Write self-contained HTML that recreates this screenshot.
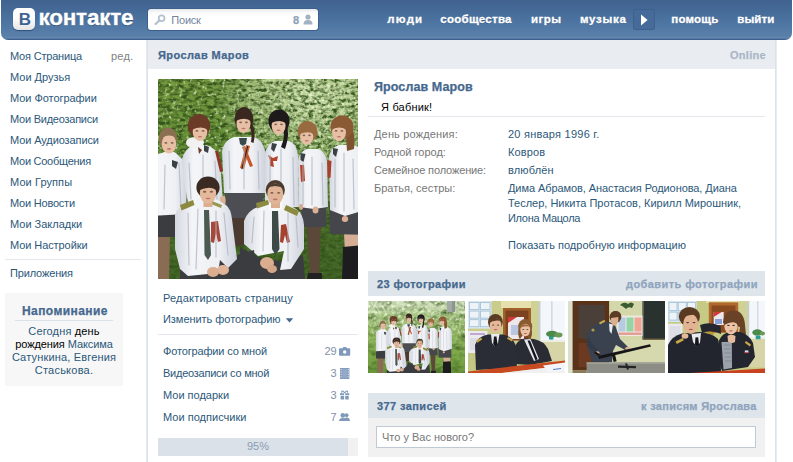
<!DOCTYPE html>
<html lang="ru">
<head>
<meta charset="utf-8">
<title>Ярослав Маров</title>
<style>
html,body{margin:0;padding:0;background:#fff;}
body{width:793px;height:462px;overflow:hidden;position:relative;font-family:"Liberation Sans",sans-serif;font-size:11px;color:#000;}
.a{position:absolute;white-space:nowrap;line-height:13px;}
.b{font-weight:bold;-webkit-text-stroke-width:.25px;}
.lnk{color:#2b587a;}
.gr{color:#777;}
#hdr{position:absolute;left:1px;top:0;width:791px;height:40px;border-radius:0 0 7px 7px;
 background:linear-gradient(#40628f 0,#456a97 10px,#5078a4 26px,#5b80aa 37px,#6a8db6 38px,#3f6190 39px);}
#logo{position:absolute;left:12px;top:8px;width:22px;height:22px;border-radius:5px;background:linear-gradient(#fff 40%,#e4e4e4);box-shadow:0 1px 1px #2f4f7a;}
#logo span{position:absolute;left:5.8px;top:2px;font-weight:bold;font-size:17px;line-height:20px;color:#3f6491;}
#ltxt{position:absolute;left:37.5px;top:6px;-webkit-text-stroke:0.3px #fff;font-weight:bold;font-size:22.5px;line-height:24px;color:#fff;text-shadow:0 1px 0 #35547e;}
#srch{position:absolute;left:147px;top:9px;width:170px;height:21px;border-radius:3px;background:linear-gradient(#e4e6e9 0,#f8f8f9 3px,#fff 6px);box-shadow:0 0 0 1px #3d5f8b;}
.nav{position:absolute;top:13px;-webkit-text-stroke-width:.3px;font-weight:bold;font-size:11.5px;text-shadow:0 1px 0 #3d5d88;line-height:13px;color:#fff;white-space:nowrap;}
#lb{position:absolute;left:146px;top:40px;width:2px;height:422px;background:linear-gradient(90deg,#e9eef3,#d5dde6);}
#rb{position:absolute;left:775px;top:40px;width:2px;height:422px;background:linear-gradient(90deg,#d5dde6,#ecf0f4);}
#tbar{position:absolute;left:148px;top:40px;width:627px;height:29px;background:#e9edf1;}
.sbar{position:absolute;left:368px;width:397px;height:25px;background:#dee5eb;}
.sep{position:absolute;height:1px;background:#e4e8ed;}
.th{position:absolute;top:301px;width:97px;height:72px;overflow:hidden;}
</style>
</head>
<body>
<!-- header -->
<div id="hdr">
 <div id="logo"><span>В</span></div>
 <div id="ltxt" style="letter-spacing:-0.23px">контакте</div>
 <div id="srch">
  <svg style="position:absolute;left:6px;top:5px" width="12" height="12" viewBox="0 0 12 12"><circle cx="7.6" cy="4.2" r="2.9" fill="none" stroke="#b4c0cf" stroke-width="1.7"/><path d="M5.4 6.4L1.6 10" stroke="#b4c0cf" stroke-width="2.2" stroke-linecap="round"/></svg>
  <span class="a" style="left:23.3px;top:5px;color:#73859c;letter-spacing:-0.22px">Поиск</span>
  <span class="a b" style="left:145px;top:5px;color:#8fa1b8;">8</span>
  <svg style="position:absolute;left:155px;top:5px" width="10" height="11" viewBox="0 0 10 11"><circle cx="5" cy="3" r="2.6" fill="#a3b1c4"/><path d="M0.5 10.5C0.5 7 2.5 6 5 6S9.5 7 9.5 10.5Z" fill="#a3b1c4"/></svg>
 </div>
 <span class="nav" style="left:386.3px;letter-spacing:1.18px">люди</span>
 <span class="nav" style="left:439.3px;letter-spacing:0.26px">сообщества</span>
 <span class="nav" style="left:530px;letter-spacing:0.49px">игры</span>
 <span class="nav" style="left:579px;letter-spacing:0.74px">музыка</span>
 <div style="position:absolute;left:632px;top:9px;width:22px;height:21px;border-radius:3px;background:#466a99;box-shadow:0 0 0 1px #3e608d inset;"><svg style="position:absolute;left:8px;top:5px" width="8" height="12" viewBox="0 0 8 12"><path d="M0 0.5L6.6 6L0 11.5Z" fill="#fff"/></svg></div>
 <span class="nav" style="left:670.3px;letter-spacing:0.20px">помощь</span>
 <span class="nav" style="left:736.3px;letter-spacing:0.06px">выйти</span>
</div>

<!-- left menu -->
<span class="a lnk" style="left:10px;top:50px;letter-spacing:-0.19px">Моя Страница</span>
<span class="a gr" style="left:111px;top:50px;color:#808080;letter-spacing:0.24px">ред.</span>
<span class="a lnk" style="left:10px;top:71px;letter-spacing:0.00px">Мои Друзья</span>
<span class="a lnk" style="left:10px;top:92px;letter-spacing:-0.05px">Мои Фотографии</span>
<span class="a lnk" style="left:10px;top:113px;letter-spacing:-0.24px">Мои Видеозаписи</span>
<span class="a lnk" style="left:10px;top:134px;letter-spacing:-0.10px">Мои Аудиозаписи</span>
<span class="a lnk" style="left:10px;top:155px;letter-spacing:-0.26px">Мои Сообщения</span>
<span class="a lnk" style="left:10px;top:176px;letter-spacing:0.09px">Мои Группы</span>
<span class="a lnk" style="left:10px;top:197px;letter-spacing:-0.21px">Мои Новости</span>
<span class="a lnk" style="left:10px;top:218px;letter-spacing:-0.01px">Мои Закладки</span>
<span class="a lnk" style="left:10px;top:239px;letter-spacing:-0.08px">Мои Настройки</span>
<div class="sep" style="left:5px;top:259px;width:136px;"></div>
<span class="a lnk" style="left:10px;top:267px;letter-spacing:-0.15px">Приложения</span>

<!-- reminder -->
<div style="position:absolute;left:5px;top:293px;width:118px;height:93px;background:#f7f7f7;"></div>
<span class="a b" style="left:22px;top:304px;font-size:12px;line-height:14px;color:#45688e;letter-spacing:0.42px">Напоминание</span>
<div class="sep" style="left:15px;top:320px;width:98px;background:#dae1e8"></div>
<div class="a" style="left:5px;top:325px;width:118px;text-align:center;color:#2b587a;white-space:normal;"><span style="letter-spacing:0.15px">Сегодня <span style="color:#000">день</span></span><br><span style="letter-spacing:-0.10px"><span style="color:#000">рождения</span> Максима</span><br><span style="letter-spacing:0.17px">Сатункина, Евгения</span><br><span style="letter-spacing:0.23px">Стаськова.</span></div>

<!-- content frame -->
<div id="lb"></div><div id="rb"></div>
<div id="tbar"></div>
<span class="a b" style="left:158px;top:49px;color:#45688e;letter-spacing:0.41px">Ярослав Маров</span>
<span class="a b" style="left:730px;top:49px;color:#aab7c7;letter-spacing:0.29px">Online</span>

<!-- main photo -->
<div id="photo" style="position:absolute;left:158px;top:79px;width:200px;height:200px;background:#5c7a3c;overflow:hidden;"><svg width="200" height="200" viewBox="0 0 200 200" style="position:absolute;left:0;top:0"><defs><linearGradient id="mg" x1="0" y1="0" x2="0" y2="1"><stop offset="0" stop-color="#75993f"/><stop offset=".3" stop-color="#668f36"/><stop offset=".6" stop-color="#5a8030"/><stop offset=".72" stop-color="#4a6e2a"/><stop offset="1" stop-color="#426326"/></linearGradient><radialGradient id="ml" cx=".8" cy=".12" r=".55"><stop offset="0" stop-color="#d2e2b2" stop-opacity=".85"/><stop offset=".5" stop-color="#d2e2b2" stop-opacity=".5"/><stop offset="1" stop-color="#dfe9c8" stop-opacity="0"/></radialGradient><filter id="mn" color-interpolation-filters="sRGB" x="0" y="0" width="100%" height="100%"><feTurbulence type="fractalNoise" baseFrequency="0.28" numOctaves="2" seed="4"/><feColorMatrix type="matrix" values="0 0 0 0 0.86  0 0 0 0 0.92  0 0 0 0 0.74  2.6 1.6 0 0 -2.3"/></filter><filter id="mn2" color-interpolation-filters="sRGB" x="0" y="0" width="100%" height="100%"><feTurbulence type="fractalNoise" baseFrequency="0.33" numOctaves="2" seed="21"/><feColorMatrix type="matrix" values="0 0 0 0 0.9  0 0 0 0 0.95  0 0 0 0 0.8  2.4 1.6 0 0 -1.85"/></filter><radialGradient id="mr" cx=".8" cy=".12" r=".5"><stop offset="0" stop-color="#fff"/><stop offset=".6" stop-color="#fff" stop-opacity=".6"/><stop offset="1" stop-color="#fff" stop-opacity="0"/></radialGradient><mask id="mm2"><rect width="200" height="200" fill="url(#mr)"/></mask><filter id="md" color-interpolation-filters="sRGB" x="0" y="0" width="100%" height="100%"><feTurbulence type="fractalNoise" baseFrequency="0.16 0.3" numOctaves="2" seed="9"/><feColorMatrix type="matrix" values="0 0 0 0 0.2  0 0 0 0 0.33  0 0 0 0 0.1  0 2.6 1.6 0 -1.75"/></filter><filter id="mb" color-interpolation-filters="sRGB" x="-5%" y="-5%" width="110%" height="110%"><feGaussianBlur stdDeviation="0.75"/></filter><linearGradient id="mf" x1="0" y1="0" x2="0" y2="1"><stop offset="0" stop-color="#fff"/><stop offset=".5" stop-color="#fff"/><stop offset=".72" stop-color="#fff" stop-opacity=".15"/><stop offset="1" stop-color="#fff" stop-opacity=".1"/></linearGradient><mask id="mm"><rect width="200" height="200" fill="url(#mf)"/></mask><linearGradient id="sh" x1="0" y1="0" x2="1" y2="0"><stop offset="0" stop-color="#d3d7df"/><stop offset=".28" stop-color="#f4f5f8"/><stop offset=".7" stop-color="#eef0f4"/><stop offset="1" stop-color="#cfd3dc"/></linearGradient></defs><rect width="200" height="200" fill="url(#mg)"/><rect width="200" height="140" fill="url(#ml)"/><rect width="200" height="200" filter="url(#md)"/><g mask="url(#mm)"><rect width="200" height="200" filter="url(#mn)"/></g><g mask="url(#mm2)"><rect width="200" height="140" filter="url(#mn2)"/></g><g filter="url(#mb)"><path d="M186 154L206 154L205 175L187 175Z" fill="#d6ae96"/><path d="M185 168L207 166L208 200L184 200Z" fill="#1d1d20"/><path d="M171 126L208 128L209 156L172 155Z" fill="#44464b"/><path d="M171 78Q173 68 181 66L195 66Q206 69 210 80L211 130L187 137L172 131Z" fill="url(#sh)"/><path d="M190 44Q198 50 196 70L189 72L188 56Z" fill="#7f5230"/><ellipse cx="184" cy="48" rx="11.5" ry="11.5" fill="#8a5a34"/><ellipse cx="181" cy="53" rx="7" ry="9.2" fill="#e6bfa4"/><path d="M173.2 50.7Q176.8 41.5 182.4 43.3Q188.7 44.7 188.8 51.2Q183.1 46.1 173.2 50.7Z" fill="#8a5a34"/><ellipse cx="178.1" cy="51.9" rx="1.4" ry="0.8" fill="#5a4036" opacity=".75"/><ellipse cx="183.9" cy="51.9" rx="1.4" ry="0.8" fill="#5a4036" opacity=".75"/><ellipse cx="181.0" cy="57.8" rx="2.1" ry="0.7" fill="#b0645a" opacity=".8"/><path d="M169.5 81l4 1l-1 17l-3.5 -1z" fill="#a8402e"/><path d="M175 69l5 1l-2 8l-3 -3z" fill="#3a4044"/><path d="M148.5 146L163 146L161 196L152 196Z" fill="#5c4838"/><path d="M150 194L164 194L164 200L149 200Z" fill="#222"/><path d="M143 126L168 126L168.5 148L144 148Z" fill="#44464b"/><path d="M140 82Q142 72 149 70L160 70Q167 72 169 82L170 128L156 130L141 128Z" fill="url(#sh)"/><ellipse cx="149.5" cy="52.5" rx="10" ry="10.5" fill="#996a40"/><ellipse cx="148.7" cy="57.4" rx="6.6" ry="8.4" fill="#e6bfa4"/><path d="M141.3 55.3Q144.7 46.9 150.0 48.6Q156.0 49.8 156.1 55.7Q150.7 51.1 141.3 55.3Z" fill="#996a40"/><ellipse cx="145.9" cy="56.4" rx="1.3" ry="0.8" fill="#5a4036" opacity=".75"/><ellipse cx="151.5" cy="56.4" rx="1.3" ry="0.8" fill="#5a4036" opacity=".75"/><ellipse cx="148.7" cy="61.8" rx="2.0" ry="0.7" fill="#b0645a" opacity=".8"/><path d="M142.5 74l5 1l-2 8l-3 -2z" fill="#3a4044"/><path d="M142 86l4 0l1 16l-4 1z" fill="#b4442e"/><path d="M107 74Q110 64 117 62L131 62Q138 64 140 76L141 128L107 128Z" fill="url(#sh)"/><path d="M127 44Q133 52 127 70L123 68Q128 56 125 48Z" fill="#1e1a1c"/><ellipse cx="121" cy="42" rx="10.6" ry="11.5" fill="#1e1a1c"/><ellipse cx="120.6" cy="46.5" rx="7" ry="9.2" fill="#e6bfa4"/><path d="M112.8 44.2Q116.4 35.0 122.0 36.8Q128.3 38.2 128.4 44.7Q122.7 39.6 112.8 44.2Z" fill="#1e1a1c"/><ellipse cx="117.7" cy="45.4" rx="1.4" ry="0.8" fill="#5a4036" opacity=".75"/><ellipse cx="123.5" cy="45.4" rx="1.4" ry="0.8" fill="#5a4036" opacity=".75"/><ellipse cx="120.6" cy="51.3" rx="2.1" ry="0.7" fill="#b0645a" opacity=".8"/><path d="M114 64l5 1l-3 8l-3 -3z" fill="#3a4044"/><path d="M110 76l5 3l5 -2l-1 5l-4 0l1 6l-4 -1l0 -6z" fill="#b4442e"/><path d="M-6 156L12 156L11 200L-5 200Z" fill="#8a6c54"/><path d="M-9 134L17 133L18 158L-10 158Z" fill="#3a3c40"/><path d="M-10 84Q-8 76 4 74Q11 70 18 74L26 82L29 100L28 135L-10 137Z" fill="url(#sh)"/><ellipse cx="10" cy="59.5" rx="9.2" ry="11" fill="#8a7050"/><ellipse cx="11" cy="65" rx="7.3" ry="9.4" fill="#e6bfa4"/><ellipse cx="7.9" cy="63.9" rx="1.5" ry="0.8" fill="#5a4036" opacity=".75"/><ellipse cx="14.1" cy="63.9" rx="1.5" ry="0.8" fill="#5a4036" opacity=".75"/><ellipse cx="11.0" cy="69.9" rx="2.2" ry="0.8" fill="#b0645a" opacity=".8"/><path d="M3 58Q10 50 19 58Q11 55 3 58Z" fill="#8a7050"/><path d="M14 81l6 2l-2 7l-4 -3z" fill="#3a4044"/><path d="M24 80Q27 69 36 66L48 66Q58 68 62 80L65 124L30 124L26 100Z" fill="url(#sh)"/><ellipse cx="37" cy="63.5" rx="9" ry="5.6" fill="#f1f1f1"/><ellipse cx="41" cy="47" rx="11.2" ry="12" fill="#6c3b28"/><ellipse cx="42" cy="53" rx="7.3" ry="9" fill="#e6bfa4"/><path d="M33.9 50.8Q37.6 41.8 43.5 43.5Q50.0 44.9 50.1 51.2Q44.2 46.2 33.9 50.8Z" fill="#6c3b28"/><ellipse cx="38.9" cy="51.9" rx="1.5" ry="0.8" fill="#5a4036" opacity=".75"/><ellipse cx="45.1" cy="51.9" rx="1.5" ry="0.8" fill="#5a4036" opacity=".75"/><ellipse cx="42.0" cy="57.7" rx="2.2" ry="0.7" fill="#b0645a" opacity=".8"/><path d="M46 66l5 2l-1 6l-4 -2z" fill="#3a4044"/><path d="M57 72l3 0l5 20l-3 1z" fill="#8e3428"/><path d="M40 68l4 3l-3 4z" fill="#6c3b28"/><path d="M71 138L87 138L86 166L74 168Z" fill="#4a3a30"/><path d="M62 118l5 -1l1 8l-5 1z" fill="#dcb296"/><path d="M67 112L106 112L104 139L68 139Z" fill="#4c4e53"/><path d="M64 72Q66 61 76 58L96 58Q104 60 107 72L107 114L66 114Z" fill="url(#sh)"/><path d="M92 40Q99 52 95.5 64L93 63Q95 52 90 44Z" fill="#3a2820"/><ellipse cx="86" cy="40" rx="9.4" ry="12" fill="#3a2820"/><ellipse cx="85.5" cy="44.5" rx="7" ry="9.6" fill="#e6bfa4"/><path d="M77.7 42.1Q81.3 32.5 86.9 34.4Q93.2 35.9 93.3 42.6Q87.6 37.3 77.7 42.1Z" fill="#3a2820"/><ellipse cx="82.6" cy="43.3" rx="1.4" ry="0.9" fill="#5a4036" opacity=".75"/><ellipse cx="88.4" cy="43.3" rx="1.4" ry="0.9" fill="#5a4036" opacity=".75"/><ellipse cx="85.5" cy="49.5" rx="2.1" ry="0.8" fill="#b0645a" opacity=".8"/><path d="M81 59l8 0l-1 6l-3 2l-3 -2z" fill="#3a4a4c"/><path d="M88 66l4 1l-6 23l-4 -1z" fill="#d0602e"/><path d="M84 68l3 -1l8 20l-3 1z" fill="#c4562a"/><path d="M89.3 67l1 .3l-6 23l-1 -.3z" fill="#222"/><g stroke="#aeb4c2" stroke-width="1.2" fill="none" opacity=".75" stroke-linecap="round"><path d="M21 84L23 128"/><path d="M7 86L6 130"/><path d="M31 84L33 120"/><path d="M57 82L59 120"/><path d="M45 76L45 120"/><path d="M71 72L72 110"/><path d="M100 72L101 110"/><path d="M86 66L86 110"/><path d="M112 76L112 126"/><path d="M135 78L136 126"/><path d="M123 70L123 104"/><path d="M145 84L145 126"/><path d="M164 84L165 126"/><path d="M154 78L154 126"/><path d="M177 80L177 128"/><path d="M195 80L196 130"/><path d="M186 74L186 132"/></g><ellipse cx="157.5" cy="131" rx="3" ry="3.6" fill="#dcb094"/><ellipse cx="187" cy="140" rx="3.2" ry="3" fill="#dcb094"/><ellipse cx="65" cy="121" rx="2.6" ry="4" fill="#dcb094"/><ellipse cx="143" cy="128" rx="2" ry="3" fill="#d4a88c"/><path d="M82 168L100 178L122 182L145 176L147 200L82 200Z" fill="#3a3c40"/><path d="M86 142Q90 131 100 128L108 124L128 124L138 130Q145 134 146 146L146 170L133 190L122 191L126 172L100 177L86 165Z" fill="url(#sh)"/><path d="M98 124l12 -3l1 4.5l-12 4z" fill="#8c8a3e"/><path d="M128 126l13 6l-2 5l-13 -6z" fill="#8c8a3e"/><path d="M111 124l7 3l6 -3l0 6l-6 4l-7 -4z" fill="#fafafa"/><path d="M114 132L120 132L121.5 170L117.5 176L114 170Z" fill="#3e4a48"/><path d="M123 146l5 -1l4 18l-3 1l-2 -8l-2 8l-3 -1z" fill="#a8402e"/><rect x="113" y="123" width="9" height="6" fill="#dcae90"/><ellipse cx="117.3" cy="111" rx="9.6" ry="10" fill="#4a3c30"/><ellipse cx="117.3" cy="115" rx="8" ry="10.4" fill="#e0b496"/><ellipse cx="113.9" cy="113.8" rx="1.6" ry="0.9" fill="#5a4036" opacity=".75"/><ellipse cx="120.7" cy="113.8" rx="1.6" ry="0.9" fill="#5a4036" opacity=".75"/><ellipse cx="117.3" cy="120.4" rx="2.4" ry="0.8" fill="#b0645a" opacity=".8"/><path d="M108 110Q117 99 126.5 110Q117 104 108 110Z" fill="#4a3c30"/><ellipse cx="109" cy="184" rx="7" ry="6" fill="#dcae90"/><ellipse cx="114" cy="190" rx="5" ry="4" fill="#d4a688"/><path d="M22 176L60 182L96 171L98 200L22 200Z" fill="#3a3c40"/><path d="M17 136Q20 127 32 124L40 121L60 121L68 126Q73 130 74 140L79 180L70 189L62 181L60 194L30 197L22 190L17 170Z" fill="url(#sh)"/><path d="M22 126l13 -5l1.5 5l-13 5.5z" fill="#8c8a3e"/><path d="M54 122l10 4l-1 3l-10 -4z" fill="#9a9850"/><rect x="45.5" y="121" width="9" height="7" fill="#dcae90"/><path d="M46 131L51 131L53 176L50 181L46.5 176Z" fill="#4a5a52"/><path d="M53 143l7 -1l3 20l-3 1l-2 -9l-2 10l-3 -1z" fill="#a8483a"/><ellipse cx="50" cy="108.5" rx="11.6" ry="11" fill="#3a2a22"/><ellipse cx="50" cy="114" rx="8.2" ry="10.6" fill="#e4b89a"/><path d="M41.0 111.3Q45.1 100.8 51.6 102.9Q59.0 104.5 59.0 111.9Q52.5 106.0 41.0 111.3Z" fill="#3a2a22"/><ellipse cx="46.6" cy="112.7" rx="1.6" ry="1.0" fill="#5a4036" opacity=".75"/><ellipse cx="53.4" cy="112.7" rx="1.6" ry="1.0" fill="#5a4036" opacity=".75"/><ellipse cx="50.0" cy="119.5" rx="2.5" ry="0.8" fill="#b0645a" opacity=".8"/><g stroke="#aeb4c2" stroke-width="1.2" fill="none" opacity=".75" stroke-linecap="round"><path d="M30 134L31 186"/><path d="M66 134L70 176"/><path d="M40 130L38 190"/><path d="M58 132L58 178"/><path d="M96 138L94 164"/><path d="M138 138L140 168"/><path d="M106 132L105 172"/><path d="M130 134L130 182"/></g><ellipse cx="65" cy="191" rx="6" ry="5" fill="#e0b496"/><ellipse cx="55" cy="193" rx="6" ry="5" fill="#dcae90"/></g></svg></div>

<!-- under photo -->
<span class="a lnk" style="left:163px;top:292px;letter-spacing:0.19px">Редактировать страницу</span>
<span class="a lnk" style="left:163px;top:313px;letter-spacing:-0.04px">Изменить фотографию</span>
<svg style="position:absolute;left:285px;top:318px" width="9" height="5" viewBox="0 0 9 5"><path d="M0.8 0.2H8.2L4.5 4.4Z" fill="#45688e"/></svg>
<div class="sep" style="left:158px;top:334px;width:200px;"></div>
<span class="a lnk" style="left:163px;top:345px;letter-spacing:-0.15px">Фотографии со мной</span>
<span class="a lnk" style="left:163px;top:367px;letter-spacing:-0.24px">Видеозаписи со мной</span>
<span class="a lnk" style="left:163px;top:389px;letter-spacing:0.00px">Мои подарки</span>
<span class="a lnk" style="left:163px;top:411px;letter-spacing:0.02px">Мои подписчики</span>
<span class="a" style="left:300.7px;width:36px;text-align:right;top:345px;color:#8190a6">29</span>
<span class="a" style="left:300.7px;width:36px;text-align:right;top:367px;color:#8190a6">3</span>
<span class="a" style="left:300.7px;width:36px;text-align:right;top:389px;color:#8190a6">3</span>
<span class="a" style="left:300.7px;width:36px;text-align:right;top:411px;color:#8190a6">7</span>
<svg style="position:absolute;left:339px;top:347px" width="12" height="9" viewBox="0 0 12 9"><path d="M0 2.2Q0 1.2 1 1.2H3.6L4.4 0H7.2L8 1.2H10.2Q11.2 1.2 11.2 2.2V7.8Q11.2 8.8 10.2 8.8H1Q0 8.8 0 7.8Z" fill="#7f99bb"/><circle cx="5.7" cy="5" r="1.7" fill="#fff"/></svg>
<svg style="position:absolute;left:340px;top:368px" width="10" height="11" viewBox="0 0 10 11"><rect x="0" y="0" width="9.4" height="11" fill="#7f99bb"/><rect x="2.2" y="0.8" width="5" height="9.4" fill="#93a9c6"/><g fill="#e8eef5"><rect x="0.6" y="1" width="1" height="1.2"/><rect x="0.6" y="3.4" width="1" height="1.2"/><rect x="0.6" y="5.8" width="1" height="1.2"/><rect x="0.6" y="8.2" width="1" height="1.2"/><rect x="7.8" y="1" width="1" height="1.2"/><rect x="7.8" y="3.4" width="1" height="1.2"/><rect x="7.8" y="5.8" width="1" height="1.2"/><rect x="7.8" y="8.2" width="1" height="1.2"/></g></svg>
<svg style="position:absolute;left:340px;top:390px" width="10" height="10" viewBox="0 0 10 10"><path d="M0 3.2H4.1V5H0ZM5.2 3.2H9.3V5H5.2ZM0.6 5.8H4.1V9.6H0.6ZM5.2 5.8H8.7V9.6H5.2Z" fill="#7f99bb"/><path d="M4.6 3C3 0 0.8 1 2 2.6M4.7 3C6.3 0 8.5 1 7.3 2.6" fill="none" stroke="#7f99bb" stroke-width="1.1"/></svg>
<svg style="position:absolute;left:339px;top:413px" width="12" height="8" viewBox="0 0 12 8"><g fill="#7f99bb"><circle cx="7.6" cy="2.2" r="1.9"/><path d="M4.6 8Q4.8 4.6 7.6 4.6Q10.6 4.6 11 8Z"/><circle cx="3.8" cy="2.4" r="2.3"/><path d="M0 8Q0.2 5 3.8 5Q7.4 5 7.6 8Z"/></g></svg>
<div style="position:absolute;left:158px;top:438px;width:200px;height:18px;background:#f1f1f1;"></div>
<div style="position:absolute;left:158px;top:438px;width:190px;height:18px;background:#dae1e8;"></div>
<span class="a" style="left:158px;width:200px;text-align:center;top:440px;color:#8a9db5;">95%</span>

<!-- profile info -->
<span class="a b" style="left:374px;top:80px;font-size:12.5px;line-height:14px;color:#45688e;letter-spacing:0.09px">Ярослав Маров</span>
<span class="a" style="left:381px;top:101px;letter-spacing:0.19px">Я бабник!</span>
<div class="sep" style="left:368px;top:116px;width:397px;"></div>
<span class="a gr" style="left:374px;top:128px;letter-spacing:0.16px">День рождения:</span>
<span class="a gr" style="left:374px;top:146px">Родной город:</span>
<span class="a gr" style="left:374px;top:164px;letter-spacing:-0.13px">Семейное положение:</span>
<span class="a gr" style="left:374px;top:182px">Братья, сестры:</span>
<span class="a lnk" style="left:508px;top:128px;letter-spacing:0.24px">20 января 1996 г.</span>
<span class="a lnk" style="left:508px;top:146px;letter-spacing:0.11px">Ковров</span>
<span class="a lnk" style="left:508px;top:164px;letter-spacing:0.15px">влюблён</span>
<span class="a lnk" style="left:508px;top:182px;letter-spacing:-0.08px">Дима Абрамов, Анастасия Родионова, Диана</span>
<span class="a lnk" style="left:508px;top:197px;letter-spacing:-0.01px">Теслер, Никита Протасов, Кирилл Мирошник,</span>
<span class="a lnk" style="left:508px;top:212px;letter-spacing:-0.31px">Илона Мацола</span>
<span class="a lnk" style="left:508px;top:239px;letter-spacing:0.02px">Показать подробную информацию</span>

<!-- photos block -->
<div class="sbar" style="top:271px"></div>
<span class="a b" style="left:377px;top:278px;color:#45688e;letter-spacing:0.39px">23 фотографии</span>
<span class="a b" style="left:626px;top:278px;color:#8fa4bd;letter-spacing:0.43px">добавить фотографии</span>
<div class="th" id="t1" style="left:368px;background:#7a9a50"><svg width="97" height="72" viewBox="0 0 97 72" style="position:absolute;left:0;top:0"><defs><linearGradient id="g1" x1="0" y1="0" x2="0" y2="1"><stop offset="0" stop-color="#dbe6cb"/><stop offset=".22" stop-color="#a3c07c"/><stop offset=".5" stop-color="#88ae56"/><stop offset=".75" stop-color="#7ba646"/><stop offset="1" stop-color="#6a963a"/></linearGradient><linearGradient id="f1" x1="0" y1="0" x2="0" y2="1"><stop offset="0" stop-color="#fff"/><stop offset=".35" stop-color="#fff" stop-opacity=".8"/><stop offset=".6" stop-color="#fff" stop-opacity=".1"/><stop offset="1" stop-color="#fff" stop-opacity=".05"/></linearGradient><mask id="m1"><rect width="97" height="72" fill="url(#f1)"/></mask><filter id="n1" color-interpolation-filters="sRGB" x="0" y="0" width="100%" height="100%"><feTurbulence type="fractalNoise" baseFrequency="0.3" numOctaves="2" seed="2"/><feColorMatrix type="matrix" values="0 0 0 0 0.93  0 0 0 0 0.97  0 0 0 0 0.86  2 1.4 0 0 -1.55"/></filter><filter id="d1" color-interpolation-filters="sRGB" x="0" y="0" width="100%" height="100%"><feTurbulence type="fractalNoise" baseFrequency="0.12 0.2" numOctaves="2" seed="7"/><feColorMatrix type="matrix" values="0 0 0 0 0.22  0 0 0 0 0.36  0 0 0 0 0.12  0 1.5 0.9 0 -1.05"/></filter><filter id="b1" color-interpolation-filters="sRGB" x="-5%" y="-5%" width="110%" height="110%"><feGaussianBlur stdDeviation="1.1"/></filter></defs><rect width="97" height="72" fill="url(#g1)"/><rect width="97" height="72" filter="url(#d1)"/><g mask="url(#m1)"><rect width="97" height="72" filter="url(#n1)"/></g><rect x="79" y="0" width="8" height="11" fill="#a3aaa6"/><rect x="84" y="0" width="3" height="11" fill="#8d9591"/><g transform="translate(11.3 2.9) scale(0.345)" filter="url(#b1)"><path d="M186 154L206 154L205 175L187 175Z" fill="#d6ae96"/><path d="M185 168L207 166L208 200L184 200Z" fill="#1d1d20"/><path d="M171 126L208 128L209 156L172 155Z" fill="#44464b"/><path d="M171 78Q173 68 181 66L195 66Q206 69 210 80L211 130L187 137L172 131Z" fill="url(#sh)"/><path d="M190 44Q198 50 196 70L189 72L188 56Z" fill="#7f5230"/><ellipse cx="184" cy="48" rx="11.5" ry="11.5" fill="#8a5a34"/><ellipse cx="181" cy="53" rx="7" ry="9.2" fill="#e6bfa4"/><path d="M173.2 50.7Q176.8 41.5 182.4 43.3Q188.7 44.7 188.8 51.2Q183.1 46.1 173.2 50.7Z" fill="#8a5a34"/><ellipse cx="178.1" cy="51.9" rx="1.4" ry="0.8" fill="#5a4036" opacity=".75"/><ellipse cx="183.9" cy="51.9" rx="1.4" ry="0.8" fill="#5a4036" opacity=".75"/><ellipse cx="181.0" cy="57.8" rx="2.1" ry="0.7" fill="#b0645a" opacity=".8"/><path d="M169.5 81l4 1l-1 17l-3.5 -1z" fill="#a8402e"/><path d="M175 69l5 1l-2 8l-3 -3z" fill="#3a4044"/><path d="M148.5 146L163 146L161 196L152 196Z" fill="#5c4838"/><path d="M150 194L164 194L164 200L149 200Z" fill="#222"/><path d="M143 126L168 126L168.5 148L144 148Z" fill="#44464b"/><path d="M140 82Q142 72 149 70L160 70Q167 72 169 82L170 128L156 130L141 128Z" fill="url(#sh)"/><ellipse cx="149.5" cy="52.5" rx="10" ry="10.5" fill="#996a40"/><ellipse cx="148.7" cy="57.4" rx="6.6" ry="8.4" fill="#e6bfa4"/><path d="M141.3 55.3Q144.7 46.9 150.0 48.6Q156.0 49.8 156.1 55.7Q150.7 51.1 141.3 55.3Z" fill="#996a40"/><ellipse cx="145.9" cy="56.4" rx="1.3" ry="0.8" fill="#5a4036" opacity=".75"/><ellipse cx="151.5" cy="56.4" rx="1.3" ry="0.8" fill="#5a4036" opacity=".75"/><ellipse cx="148.7" cy="61.8" rx="2.0" ry="0.7" fill="#b0645a" opacity=".8"/><path d="M142.5 74l5 1l-2 8l-3 -2z" fill="#3a4044"/><path d="M142 86l4 0l1 16l-4 1z" fill="#b4442e"/><path d="M107 74Q110 64 117 62L131 62Q138 64 140 76L141 128L107 128Z" fill="url(#sh)"/><path d="M127 44Q133 52 127 70L123 68Q128 56 125 48Z" fill="#1e1a1c"/><ellipse cx="121" cy="42" rx="10.6" ry="11.5" fill="#1e1a1c"/><ellipse cx="120.6" cy="46.5" rx="7" ry="9.2" fill="#e6bfa4"/><path d="M112.8 44.2Q116.4 35.0 122.0 36.8Q128.3 38.2 128.4 44.7Q122.7 39.6 112.8 44.2Z" fill="#1e1a1c"/><ellipse cx="117.7" cy="45.4" rx="1.4" ry="0.8" fill="#5a4036" opacity=".75"/><ellipse cx="123.5" cy="45.4" rx="1.4" ry="0.8" fill="#5a4036" opacity=".75"/><ellipse cx="120.6" cy="51.3" rx="2.1" ry="0.7" fill="#b0645a" opacity=".8"/><path d="M114 64l5 1l-3 8l-3 -3z" fill="#3a4044"/><path d="M110 76l5 3l5 -2l-1 5l-4 0l1 6l-4 -1l0 -6z" fill="#b4442e"/><path d="M-6 156L12 156L11 200L-5 200Z" fill="#8a6c54"/><path d="M-9 134L17 133L18 158L-10 158Z" fill="#3a3c40"/><path d="M-10 84Q-8 76 4 74Q11 70 18 74L26 82L29 100L28 135L-10 137Z" fill="url(#sh)"/><ellipse cx="10" cy="59.5" rx="9.2" ry="11" fill="#8a7050"/><ellipse cx="11" cy="65" rx="7.3" ry="9.4" fill="#e6bfa4"/><ellipse cx="7.9" cy="63.9" rx="1.5" ry="0.8" fill="#5a4036" opacity=".75"/><ellipse cx="14.1" cy="63.9" rx="1.5" ry="0.8" fill="#5a4036" opacity=".75"/><ellipse cx="11.0" cy="69.9" rx="2.2" ry="0.8" fill="#b0645a" opacity=".8"/><path d="M3 58Q10 50 19 58Q11 55 3 58Z" fill="#8a7050"/><path d="M14 81l6 2l-2 7l-4 -3z" fill="#3a4044"/><path d="M24 80Q27 69 36 66L48 66Q58 68 62 80L65 124L30 124L26 100Z" fill="url(#sh)"/><ellipse cx="37" cy="63.5" rx="9" ry="5.6" fill="#f1f1f1"/><ellipse cx="41" cy="47" rx="11.2" ry="12" fill="#6c3b28"/><ellipse cx="42" cy="53" rx="7.3" ry="9" fill="#e6bfa4"/><path d="M33.9 50.8Q37.6 41.8 43.5 43.5Q50.0 44.9 50.1 51.2Q44.2 46.2 33.9 50.8Z" fill="#6c3b28"/><ellipse cx="38.9" cy="51.9" rx="1.5" ry="0.8" fill="#5a4036" opacity=".75"/><ellipse cx="45.1" cy="51.9" rx="1.5" ry="0.8" fill="#5a4036" opacity=".75"/><ellipse cx="42.0" cy="57.7" rx="2.2" ry="0.7" fill="#b0645a" opacity=".8"/><path d="M46 66l5 2l-1 6l-4 -2z" fill="#3a4044"/><path d="M57 72l3 0l5 20l-3 1z" fill="#8e3428"/><path d="M40 68l4 3l-3 4z" fill="#6c3b28"/><path d="M71 138L87 138L86 166L74 168Z" fill="#4a3a30"/><path d="M62 118l5 -1l1 8l-5 1z" fill="#dcb296"/><path d="M67 112L106 112L104 139L68 139Z" fill="#4c4e53"/><path d="M64 72Q66 61 76 58L96 58Q104 60 107 72L107 114L66 114Z" fill="url(#sh)"/><path d="M92 40Q99 52 95.5 64L93 63Q95 52 90 44Z" fill="#3a2820"/><ellipse cx="86" cy="40" rx="9.4" ry="12" fill="#3a2820"/><ellipse cx="85.5" cy="44.5" rx="7" ry="9.6" fill="#e6bfa4"/><path d="M77.7 42.1Q81.3 32.5 86.9 34.4Q93.2 35.9 93.3 42.6Q87.6 37.3 77.7 42.1Z" fill="#3a2820"/><ellipse cx="82.6" cy="43.3" rx="1.4" ry="0.9" fill="#5a4036" opacity=".75"/><ellipse cx="88.4" cy="43.3" rx="1.4" ry="0.9" fill="#5a4036" opacity=".75"/><ellipse cx="85.5" cy="49.5" rx="2.1" ry="0.8" fill="#b0645a" opacity=".8"/><path d="M81 59l8 0l-1 6l-3 2l-3 -2z" fill="#3a4a4c"/><path d="M88 66l4 1l-6 23l-4 -1z" fill="#d0602e"/><path d="M84 68l3 -1l8 20l-3 1z" fill="#c4562a"/><path d="M89.3 67l1 .3l-6 23l-1 -.3z" fill="#222"/><g stroke="#aeb4c2" stroke-width="1.2" fill="none" opacity=".75" stroke-linecap="round"><path d="M21 84L23 128"/><path d="M7 86L6 130"/><path d="M31 84L33 120"/><path d="M57 82L59 120"/><path d="M45 76L45 120"/><path d="M71 72L72 110"/><path d="M100 72L101 110"/><path d="M86 66L86 110"/><path d="M112 76L112 126"/><path d="M135 78L136 126"/><path d="M123 70L123 104"/><path d="M145 84L145 126"/><path d="M164 84L165 126"/><path d="M154 78L154 126"/><path d="M177 80L177 128"/><path d="M195 80L196 130"/><path d="M186 74L186 132"/></g><ellipse cx="157.5" cy="131" rx="3" ry="3.6" fill="#dcb094"/><ellipse cx="187" cy="140" rx="3.2" ry="3" fill="#dcb094"/><ellipse cx="65" cy="121" rx="2.6" ry="4" fill="#dcb094"/><ellipse cx="143" cy="128" rx="2" ry="3" fill="#d4a88c"/><path d="M82 168L100 178L122 182L145 176L147 200L82 200Z" fill="#3a3c40"/><path d="M86 142Q90 131 100 128L108 124L128 124L138 130Q145 134 146 146L146 170L133 190L122 191L126 172L100 177L86 165Z" fill="url(#sh)"/><path d="M98 124l12 -3l1 4.5l-12 4z" fill="#8c8a3e"/><path d="M128 126l13 6l-2 5l-13 -6z" fill="#8c8a3e"/><path d="M111 124l7 3l6 -3l0 6l-6 4l-7 -4z" fill="#fafafa"/><path d="M114 132L120 132L121.5 170L117.5 176L114 170Z" fill="#3e4a48"/><path d="M123 146l5 -1l4 18l-3 1l-2 -8l-2 8l-3 -1z" fill="#a8402e"/><rect x="113" y="123" width="9" height="6" fill="#dcae90"/><ellipse cx="117.3" cy="111" rx="9.6" ry="10" fill="#4a3c30"/><ellipse cx="117.3" cy="115" rx="8" ry="10.4" fill="#e0b496"/><ellipse cx="113.9" cy="113.8" rx="1.6" ry="0.9" fill="#5a4036" opacity=".75"/><ellipse cx="120.7" cy="113.8" rx="1.6" ry="0.9" fill="#5a4036" opacity=".75"/><ellipse cx="117.3" cy="120.4" rx="2.4" ry="0.8" fill="#b0645a" opacity=".8"/><path d="M108 110Q117 99 126.5 110Q117 104 108 110Z" fill="#4a3c30"/><ellipse cx="109" cy="184" rx="7" ry="6" fill="#dcae90"/><ellipse cx="114" cy="190" rx="5" ry="4" fill="#d4a688"/><path d="M22 176L60 182L96 171L98 200L22 200Z" fill="#3a3c40"/><path d="M17 136Q20 127 32 124L40 121L60 121L68 126Q73 130 74 140L79 180L70 189L62 181L60 194L30 197L22 190L17 170Z" fill="url(#sh)"/><path d="M22 126l13 -5l1.5 5l-13 5.5z" fill="#8c8a3e"/><path d="M54 122l10 4l-1 3l-10 -4z" fill="#9a9850"/><rect x="45.5" y="121" width="9" height="7" fill="#dcae90"/><path d="M46 131L51 131L53 176L50 181L46.5 176Z" fill="#4a5a52"/><path d="M53 143l7 -1l3 20l-3 1l-2 -9l-2 10l-3 -1z" fill="#a8483a"/><ellipse cx="50" cy="108.5" rx="11.6" ry="11" fill="#3a2a22"/><ellipse cx="50" cy="114" rx="8.2" ry="10.6" fill="#e4b89a"/><path d="M41.0 111.3Q45.1 100.8 51.6 102.9Q59.0 104.5 59.0 111.9Q52.5 106.0 41.0 111.3Z" fill="#3a2a22"/><ellipse cx="46.6" cy="112.7" rx="1.6" ry="1.0" fill="#5a4036" opacity=".75"/><ellipse cx="53.4" cy="112.7" rx="1.6" ry="1.0" fill="#5a4036" opacity=".75"/><ellipse cx="50.0" cy="119.5" rx="2.5" ry="0.8" fill="#b0645a" opacity=".8"/><g stroke="#aeb4c2" stroke-width="1.2" fill="none" opacity=".75" stroke-linecap="round"><path d="M30 134L31 186"/><path d="M66 134L70 176"/><path d="M40 130L38 190"/><path d="M58 132L58 178"/><path d="M96 138L94 164"/><path d="M138 138L140 168"/><path d="M106 132L105 172"/><path d="M130 134L130 182"/></g><ellipse cx="65" cy="191" rx="6" ry="5" fill="#e0b496"/><ellipse cx="55" cy="193" rx="6" ry="5" fill="#dcae90"/></g></svg></div>
<div class="th" id="t2" style="left:468px;background:#b9b48a"><svg width="97" height="72" viewBox="0 0 97 72" style="position:absolute;left:0;top:0"><defs><filter id="b2" color-interpolation-filters="sRGB" x="-5%" y="-5%" width="110%" height="110%"><feGaussianBlur stdDeviation="0.55"/></filter></defs><rect width="97" height="72" fill="#c9cc8a"/><g filter="url(#b2)"><rect x="0" y="0" width="23.5" height="27.6" fill="#dbe6ee"/><rect x="1.5" y="1.5" width="9.5" height="7" fill="#eef3f7" stroke="#9fbfd8" stroke-width=".8"/><rect x="12.5" y="1.5" width="9.5" height="7" fill="#eef3f7" stroke="#9fbfd8" stroke-width=".8"/><rect x="1.5" y="10.1" width="9.5" height="7" fill="#eef3f7" stroke="#9fbfd8" stroke-width=".8"/><rect x="12.5" y="10.1" width="9.5" height="7" fill="#eef3f7" stroke="#9fbfd8" stroke-width=".8"/><rect x="1.5" y="18.7" width="9.5" height="7" fill="#eef3f7" stroke="#9fbfd8" stroke-width=".8"/><rect x="12.5" y="18.7" width="9.5" height="7" fill="#eef3f7" stroke="#9fbfd8" stroke-width=".8"/><rect x="0" y="30" width="19.5" height="22" fill="#e9e9ee"/><rect x="2" y="32" width="15" height="2" fill="#c0a8d0"/><rect x="2" y="37" width="15" height="12" fill="#dcdce4"/><rect x="0" y="52" width="10" height="20" fill="#c4c684"/><rect x="33" y="0" width="32" height="7" fill="#e6dfae"/><rect x="35" y="7" width="28" height="32" fill="#a2602c"/><rect x="37.5" y="9.5" width="23" height="30" fill="#7c4220"/><rect x="40" y="16" width="16" height="22" fill="#ece8ec"/><path d="M40 16h9l-9 6z" fill="#d23a3a"/><rect x="43" y="24" width="11" height="10" fill="#b8c6e0"/><rect x="63" y="0" width="7.5" height="45" fill="#d0d294"/><rect x="70" y="0" width="27" height="39" fill="#f3f6fa"/><rect x="70" y="0" width="2.4" height="39" fill="#c9cec4"/><rect x="83" y="0" width="1.6" height="39" fill="#d4dadf"/><rect x="70" y="39" width="27" height="2" fill="#eceee4"/><rect x="70" y="41" width="27" height="20" fill="#d7d4a8"/><ellipse cx="84" cy="33" rx="6" ry="3.2" fill="#4c8a4a"/><ellipse cx="90.5" cy="34" rx="4" ry="2.4" fill="#6a9a58"/><rect x="81" y="35.5" width="4.4" height="3" fill="#2e9a94"/><path d="M46.5 46Q50 38 57 37.5L66 38Q76 40 80 48L84 60L62 64L47 63Z" fill="#2a2c34"/><path d="M56 38.5L62.5 38L71 58L66 60Z" fill="#e6e8ee"/><path d="M59.5 39.5L62 39.5L69.5 58L67.5 59.5Z" fill="#15161a"/><ellipse cx="57.2" cy="25.5" rx="7" ry="7.4" fill="#8a5a30"/><path d="M50.5 27Q49.5 36 52 38L55 34Z" fill="#7e522c"/><path d="M63.5 27Q65 35 62 38L60 34Z" fill="#7e522c"/><ellipse cx="57.3" cy="29" rx="4.9" ry="6.3" fill="#e9c0a4"/><path d="M51.5 27.5Q55 19.5 63.5 26.5Q57 23.5 51.5 27.5Z" fill="#9a6a3c"/><ellipse cx="55.3" cy="28.6" rx="1" ry=".5" fill="#5a4036"/><ellipse cx="59.4" cy="28.6" rx="1" ry=".5" fill="#5a4036"/><ellipse cx="57.4" cy="32.6" rx="1.6" ry=".5" fill="#b0645a"/><path d="M7 44Q10 35 20 33.5L35 33.5Q44 35 47.5 44L49 67L8 69Z" fill="#2b2d36"/><path d="M23 33L31.5 33L30 42L27 45.5L24 42Z" fill="#e9ebee"/><path d="M26 35.5L28.5 35.5L29.5 43L27.3 46L25.2 43Z" fill="#15161a"/><path d="M8 40l5 -3.4l1.2 1.8l-5 3.4z" fill="#c8a848"/><path d="M40 36l5 2.6l-1 1.8l-5 -2.6z" fill="#c8a848"/><ellipse cx="27.4" cy="21" rx="7.4" ry="8" fill="#5a3c24"/><ellipse cx="27.6" cy="24.6" rx="5.8" ry="7.4" fill="#e4b898"/><path d="M20.2 22.5Q23 12 34.8 20.5Q27 17.5 20.2 22.5Z" fill="#5a3c24"/><ellipse cx="25.2" cy="24" rx="1.1" ry=".55" fill="#4a342c"/><ellipse cx="30" cy="24" rx="1.1" ry=".55" fill="#4a342c"/><ellipse cx="27.6" cy="28.6" rx="1.8" ry=".55" fill="#b0645a"/><path d="M0 70.4L97 59.4V64.5L34 72H0Z" fill="#c84a20"/><path d="M34 72L97 64.5V72Z" fill="#f0f0f2"/><path d="M75 64.4L97 61.5V70L80 71Z" fill="#f4f5f8"/><path d="M85 68l8 -1l.2 1l-8 1z" fill="#5a7ac8"/></g></svg></div>
<div class="th" id="t3" style="left:568px;background:#8a8468"><svg width="97" height="72" viewBox="0 0 97 72" style="position:absolute;left:0;top:0"><defs><filter id="b3" color-interpolation-filters="sRGB" x="-5%" y="-5%" width="110%" height="110%"><feGaussianBlur stdDeviation="0.55"/></filter></defs><rect width="97" height="72" fill="#d3d7a9"/><g filter="url(#b3)"><rect x="0" y="0" width="4.8" height="72" fill="#dcdfcc"/><rect x="4.6" y="0" width="36.5" height="69.5" fill="#5a3119"/><rect x="10.4" y="3.8" width="26.3" height="33.7" fill="#4a4039"/><rect x="10.4" y="42" width="26.3" height="24" fill="#6b3a20"/><rect x="4.6" y="69.5" width="14" height="2.5" fill="#8a7a58"/><rect x="75" y="0" width="22" height="38" fill="#2a3230"/><rect x="74" y="0" width="1.6" height="38.5" fill="#7a8070"/><rect x="75" y="37.5" width="22" height="1.4" fill="#6a5a3a"/><rect x="49" y="14.5" width="25.5" height="20.5" fill="#eceae0"/><rect x="50.5" y="16.5" width="7" height="14" fill="#b4cbe2"/><rect x="58.5" y="16.5" width="7" height="14" fill="#93d3a5"/><rect x="66.5" y="16.5" width="7" height="14" fill="#f0a493"/><rect x="50.5" y="31.5" width="23" height="2.4" fill="#e49a90"/><path d="M52 4Q56 0 60 3Q63 0 66 3L64 7Q60 5 58 8Q55 5 52 4Z" fill="#3a5a30"/><rect x="41" y="39" width="56" height="23" fill="#d6d9ae"/><path d="M27.6 23Q33 19.5 41.6 21L47 24L52 38L60 46L58 49.5L48 44L45 50L44 61H24L19 44Q17.5 34 22 27Z" fill="#3a4250"/><path d="M20 36L30 50L27.5 53L18.5 44Z" fill="#343c4a"/><path d="M41 22.5L45 23.5L43.5 33L41.5 30Z" fill="#e8eaee"/><path d="M31 21.4l5.4 -2.6l1 1.8l-5.4 2.8z" fill="#c8a848"/><circle cx="25" cy="29" r="1.6" fill="#b09a40"/><ellipse cx="47.4" cy="16" rx="5.9" ry="6" fill="#5c3c24"/><path d="M43 17Q42.6 23 46 25L50 22L50.5 16Z" fill="#dcae90"/><path d="M41.6 17Q43 8.5 50 10.5Q54 12 53 18Q49 13.5 41.6 17Z" fill="#5c3c24"/><ellipse cx="59.5" cy="47.6" rx="2.4" ry="1.8" fill="#dcae90"/><ellipse cx="29.4" cy="52" rx="2.2" ry="1.8" fill="#dcae90"/><path d="M30 55L82 43.2L83 45.4L31 58Z" fill="#161618"/><path d="M44 54l3 -.7l1.6 7l-3 .7z" fill="#161618"/><path d="M30 55l-4 -3l1.4 -1.4l5 3z" fill="#161618"/><rect x="18.6" y="61.4" width="79" height="10.6" fill="#8c8e86"/><rect x="18.6" y="61.4" width="79" height="1.4" fill="#a4a69c"/><path d="M50 64.5l18 .5l0 2.2l-18 -.5z" fill="#242426"/><path d="M57 62.6l2 -.4l2 6l-2 .5z" fill="#242426"/></g></svg></div>
<div class="th" id="t4" style="left:668px;background:#a09a70"><svg width="97" height="72" viewBox="0 0 97 72" style="position:absolute;left:0;top:0"><defs><filter id="b4" color-interpolation-filters="sRGB" x="-5%" y="-5%" width="110%" height="110%"><feGaussianBlur stdDeviation="0.55"/></filter></defs><rect width="97" height="72" fill="#c6ca84"/><g filter="url(#b4)"><rect x="0" y="0" width="28.5" height="21" fill="#d9e5ee"/><rect x="1.0" y="1.5" width="8" height="8" fill="#eef3f7" stroke="#9fbfd8" stroke-width=".8"/><rect x="10.2" y="1.5" width="8" height="8" fill="#eef3f7" stroke="#9fbfd8" stroke-width=".8"/><rect x="19.4" y="1.5" width="8" height="8" fill="#eef3f7" stroke="#9fbfd8" stroke-width=".8"/><rect x="1.0" y="11.1" width="8" height="8" fill="#eef3f7" stroke="#9fbfd8" stroke-width=".8"/><rect x="10.2" y="11.1" width="8" height="8" fill="#eef3f7" stroke="#9fbfd8" stroke-width=".8"/><rect x="19.4" y="11.1" width="8" height="8" fill="#eef3f7" stroke="#9fbfd8" stroke-width=".8"/><rect x="0" y="22.7" width="14.5" height="23" fill="#e9e9ee"/><rect x="1.5" y="25" width="11" height="18" fill="#dddde6"/><rect x="38" y="0" width="36" height="2" fill="#e6dfae"/><rect x="40.8" y="1.3" width="29.6" height="30" fill="#b0682c"/><rect x="43.5" y="4.5" width="24" height="27" fill="#8a4a20"/><rect x="45.7" y="11" width="10" height="13" fill="#ece8ec"/><path d="M45.7 11h8l-8 5z" fill="#d23a3a"/><path d="M47 18h7v5h-7z" fill="#8aa0d8"/><rect x="70.4" y="0" width="9" height="40" fill="#cfd294"/><rect x="79.5" y="0" width="17.5" height="36" fill="#f3f6fa"/><rect x="79" y="0" width="2.2" height="36" fill="#c9cec4"/><rect x="89" y="0" width="1.4" height="36" fill="#d4dadf"/><rect x="79" y="36" width="18" height="2.4" fill="#eceee4"/><rect x="79" y="38.4" width="18" height="28" fill="#d7d4a8"/><ellipse cx="89.3" cy="31.4" rx="5" ry="3.2" fill="#4c8a4a"/><rect x="87.7" y="34.6" width="4.8" height="3.6" fill="#2e9a94"/><ellipse cx="94.5" cy="32.5" rx="2.5" ry="2" fill="#6a9a58"/><rect x="14.5" y="60" width="4.2" height="11" fill="#c8a050"/><path d="M55 22Q56 9 66 9.5Q76 10 77 24L79 44Q78 52 74 53L70 40L72 26Z" fill="#6a4228"/><path d="M50.7 40Q54 32 62 31L72 31Q82 34 85 42L87 56L80 66L54 70L50 58Z" fill="#23262e"/><path d="M53.5 41L63.8 40.8L64 67L55.5 68.5Z" fill="#9ca2ab"/><path d="M56 44h6M56 48h6.5M56.5 52h6M57 56h6M57 60h6" stroke="#7d838d" stroke-width=".8" fill="none"/><path d="M78 40l5 3.6l-1.2 1.8l-5 -3.6z" fill="#c8a848"/><rect x="76.8" y="49.4" width="3.6" height="2.6" fill="#d8dcf0"/><rect x="76.8" y="51.2" width="3.6" height="1" fill="#c83a3a"/><path d="M0 44Q4 35 14 32.5L32 31Q44 32 50 38L52.5 50L53 72H0Z" fill="#22252e"/><path d="M23.5 33L33 32L32 41.5L29 46L25 41Z" fill="#e9ebee"/><path d="M27.4 36.5L30.2 36.3L31 43.5L29 46.5L27 43.5Z" fill="#14151a"/><path d="M7.5 40.5l7 -3.6l1.4 2.4l-7 3.8z" fill="#c8a848"/><path d="M38 29.5l8 2l-.6 2.4l-8 -2z" fill="#b89838"/><path d="M32 24Q42 20 52.5 25L53 33Q44 28 34 32Z" fill="#24272f"/><ellipse cx="17" cy="35" rx="3.4" ry="2.8" fill="#e4b898"/><ellipse cx="21.4" cy="15.6" rx="10.6" ry="9.6" fill="#5a3a22"/><ellipse cx="22.7" cy="23" rx="7.5" ry="10" fill="#e2b494"/><path d="M11.5 18Q15 4.5 32 13.5Q26 13 20 14.5Q15 16 11.5 18Z" fill="#5a3a22"/><ellipse cx="19.6" cy="21.6" rx="1.5" ry=".7" fill="#4a342c"/><ellipse cx="26" cy="21.6" rx="1.5" ry=".7" fill="#4a342c"/><ellipse cx="22.8" cy="28.4" rx="2.2" ry=".7" fill="#a8584e"/><ellipse cx="63" cy="25.2" rx="6.6" ry="8.2" fill="#ecc4a8"/><path d="M56 24Q57 12 66 13Q72 14 70.5 25Q67 18 56 24Z" fill="#6a4228"/><ellipse cx="60.4" cy="24.4" rx="1.3" ry=".6" fill="#4a342c"/><ellipse cx="65.6" cy="24.4" rx="1.3" ry=".6" fill="#4a342c"/><ellipse cx="63" cy="29.8" rx="1.9" ry=".6" fill="#b0645a"/><path d="M59.5 35Q63 32.5 67.5 35L67 41Q63.5 43 60 40.5Z" fill="#e6ba9c"/><path d="M22 72L97 67.6V72Z" fill="#c84220"/></g></svg></div>

<!-- wall -->
<div class="sbar" style="top:393px"></div>
<div style="position:absolute;left:368px;top:418px;width:397px;height:39px;background:#f1f1f1;"></div>
<span class="a b" style="left:377px;top:400px;color:#45688e;letter-spacing:0.41px">377 записей</span>
<span class="a b" style="left:641px;top:400px;color:#8fa4bd;letter-spacing:0.30px">к записям Ярослава</span>
<div style="position:absolute;left:376px;top:426px;width:378px;height:20px;border:1px solid #c0cad5;background:#fff;"></div>
<span class="a gr" style="left:382px;top:431px">Что у Вас нового?</span>
</body>
</html>
